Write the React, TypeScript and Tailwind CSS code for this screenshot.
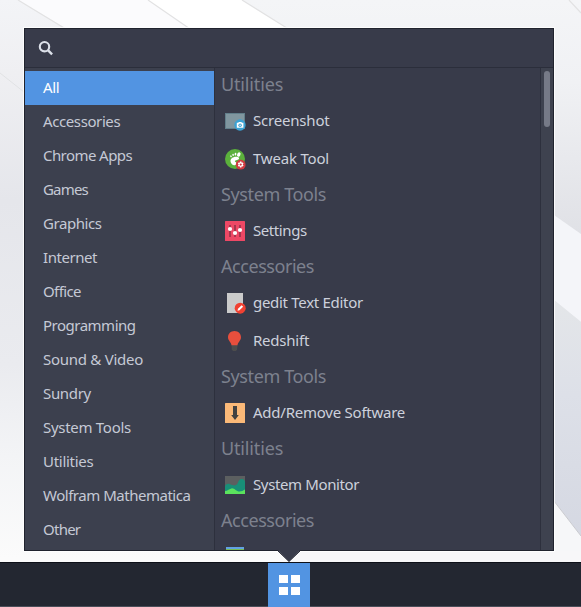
import type { ReactNode } from "react";

const categories: { name: string; track: string }[] = [
  { name: "All", track: "tracking-[-0.4px]" },
  { name: "Accessories", track: "tracking-[-0.4px]" },
  { name: "Chrome Apps", track: "tracking-[-0.57px]" },
  { name: "Games", track: "tracking-[-0.8px]" },
  { name: "Graphics", track: "tracking-[-0.44px]" },
  { name: "Internet", track: "tracking-[-0.44px]" },
  { name: "Office", track: "tracking-[-0.6px]" },
  { name: "Programming", track: "tracking-[-0.5px]" },
  { name: "Sound & Video", track: "tracking-[-0.27px]" },
  { name: "Sundry", track: "tracking-[-0.33px]" },
  { name: "System Tools", track: "tracking-[-0.29px]" },
  { name: "Utilities", track: "tracking-[-0.28px]" },
  { name: "Wolfram Mathematica", track: "tracking-[-0.48px]" },
  { name: "Other", track: "tracking-[-0.75px]" },
];

function Wallpaper() {
  return (
    <svg className="absolute inset-0 h-full w-full" viewBox="0 0 581 607" preserveAspectRatio="none">
      <defs>
        <linearGradient id="base" x1="0" y1="0" x2="0" y2="1">
          <stop offset="0" stopColor="#f3f4f7" />
          <stop offset="0.12" stopColor="#efeff2" />
          <stop offset="0.33" stopColor="#e5e6eb" />
          <stop offset="0.6" stopColor="#eaebef" />
          <stop offset="0.75" stopColor="#f3f4f6" />
          <stop offset="0.92" stopColor="#fbfbfb" />
        </linearGradient>
        <linearGradient id="right" x1="0" y1="0" x2="0" y2="234" gradientUnits="userSpaceOnUse">
          <stop offset="0" stopColor="#f4f5f7" />
          <stop offset="0.35" stopColor="#f0f1f4" />
          <stop offset="1" stopColor="#e0e1e6" />
        </linearGradient>
        <linearGradient id="shade" x1="0" y1="0" x2="0" y2="1">
          <stop offset="0" stopColor="#e4e6e9" />
          <stop offset="0.4" stopColor="#dde0e8" />
          <stop offset="1" stopColor="#d5d8e2" />
        </linearGradient>
      </defs>
      <rect width="581" height="607" fill="url(#base)" />
      <path d="M18 0H148L192 30H69Z" fill="#fbfbfd" />
      <path d="M148 0H242L290 30H192Z" fill="#ffffff" />
      <path d="M242 0H581V240H540V30H290Z" fill="url(#right)" />
      <path d="M18 0L69 31M148 0L193 31M242 0L290 30M569 0L581 13" stroke="#e2e2e3" strokeWidth="1.2" fill="none" />
      <path d="M0 73L24 92" stroke="#e1e2e4" fill="none" />
      <path d="M554 215L581 234V322L554 300Z" fill="#f4f5f9" />
      <path d="M554 300L581 322V536L554 501Z" fill="url(#shade)" />
      <path d="M554 501L581 536V562H554Z" fill="#f6f7f9" />
      <path d="M554 501L581 536" stroke="#c9cacf" />
      <path d="M581 551V562H290V551Z" fill="#f7f7f9" />
    </svg>
  );
}

function IconFrame({ children }: { children: ReactNode }) {
  return (
    <svg className="h-[22px] w-[22px] shrink-0" viewBox="0 0 22 22">
      {children}
    </svg>
  );
}

const icons = {
  screenshot: (
    <IconFrame>
      <rect x="1" y="3" width="20" height="16" fill="#627f8b" />
      <rect x="2" y="4" width="18" height="14" fill="#80969f" />
      <circle cx="16" cy="15" r="5.7" fill="#3ba2d3" />
      <path d="M12.8 12.8h1.500l.5-.9h2.600l.5.9h1.500v4.900h-6.600z" fill="#fff" />
      <circle cx="16.100" cy="15.200" r="1.700" fill="#3ba2d3" />
      <circle cx="16.100" cy="15.200" r=".7" fill="#fff" />
    </IconFrame>
  ),
  tweak: (
    <IconFrame>
      <circle cx="11" cy="11" r="10" fill="#5bb13c" />
      <path d="M12 8.800c-3.200.1-5.700 1.900-5.500 4.500.2 2.500 2.200 4.200 4.300 3.900 1.900-.3 2.100-1.500 1.600-2.500-.4-.9-1.700-.9-1.500-1.800.2-1 3.900-.7 4.200-2.500.1-1-1-1.600-3.100-1.600z" fill="#fff" />
      <ellipse cx="14.800" cy="6.500" rx="1.600" ry="2.300" transform="rotate(25 14.800 6.500)" fill="#fff" />
      <ellipse cx="11.500" cy="6.100" rx=".9" ry="1.400" transform="rotate(8 11.500 6.100)" fill="#fff" />
      <ellipse cx="9.100" cy="6.900" rx=".8" ry="1.100" transform="rotate(-12 9.100 6.900)" fill="#fff" />
      <ellipse cx="7" cy="8.300" rx=".7" ry="1" transform="rotate(-30 7 8.300)" fill="#fff" />
      <circle cx="16.700" cy="16.700" r="4.900" fill="#d13b42" />
      <path d="M16 13.600h1.400l.3 1.100 1.100-.3.7 1.200-.8.9.8.9-.7 1.200-1.100-.3-.3 1.300H16l-.3-1.300-1.100.3-.7-1.200.8-.9-.8-.9.7-1.200 1.100.3z" fill="#fff" />
      <circle cx="16.700" cy="16.600" r="1.100" fill="#d13b42" />
    </IconFrame>
  ),
  settings: (
    <IconFrame>
      <rect x="1" y="1" width="20" height="20" rx=".6" fill="#ee4865" />
      <path d="M6 5v12M11 5v12M16 5v12" stroke="#8e3047" strokeWidth="1.500" />
      <circle cx="6" cy="9" r="2.100" fill="#fff" />
      <circle cx="11" cy="13" r="2.100" fill="#fff" />
      <circle cx="16" cy="10" r="2.100" fill="#fff" />
    </IconFrame>
  ),
  gedit: (
    <IconFrame>
      <rect x="3" y="1" width="16" height="20" fill="#cbcbcb" />
      <circle cx="16.200" cy="16.200" r="5.500" fill="#f14132" />
      <path d="M13.500 18.800l.5-2 3.600-3.500 1.500 1.500-3.600 3.500z" fill="#fff" />
    </IconFrame>
  ),
  redshift: (
    <IconFrame>
      <path d="M7.500 15h6l-.4 4.500-1.200 1.500H9l-1.200-1.500z" fill="#4d4d4d" />
      <path d="M10.500 1C6.700 1 4 3.800 4 7.300c0 3.200 3 4.800 3.500 8h6c.5-3.200 3.500-4.800 3.500-8C17 3.800 14.300 1 10.500 1z" fill="#e84f3d" />
    </IconFrame>
  ),
  software: (
    <IconFrame>
      <rect x="1" y="1" width="20" height="20" rx=".6" fill="#fbb978" />
      <path d="M9 4h4v9h1.800L11 18l-3.800-5H9z" fill="#414141" />
    </IconFrame>
  ),
  monitor: (
    <IconFrame>
      <rect x="1" y="2" width="20" height="18" fill="#5c5f60" />
      <path d="M1 20v-8c1.200-2 3-2.600 5-1.800 3 1.200 5.500 2.300 7.500-.7 1-2.500 2-4.500 4.500-4.500 1.500 0 2.500 1 3 2.500V20z" fill="#188f78" />
      <path d="M1 20v-3c2.500 0 4.500-2.300 7-2.800 2.700 0 4.500 3.300 7.500 3.300 2 0 3.500-1 5.500-2V20z" fill="#5be35d" />
    </IconFrame>
  ),
  picture: (
    <IconFrame>
      <rect x="2" y="1" width="18" height="20" fill="#76ba56" />
      <rect x="2" y="1" width="18" height="2" fill="#62a2e4" />
    </IconFrame>
  ),
};

const groups: { title: string; track: string; apps: { name: string; icon: keyof typeof icons; track: string }[] }[] = [
  {
    title: "Utilities",
    track: "tracking-[-0.15px]",
    apps: [
      { name: "Screenshot", icon: "screenshot", track: "tracking-[-0.2px]" },
      { name: "Tweak Tool", icon: "tweak", track: "tracking-[-0.2px]" },
    ],
  },
  {
    title: "System Tools",
    track: "tracking-[-0.38px]",
    apps: [{ name: "Settings", icon: "settings", track: "tracking-[-0.42px]" }],
  },
  {
    title: "Accessories",
    track: "tracking-[-0.45px]",
    apps: [
      { name: "gedit Text Editor", icon: "gedit", track: "tracking-[-0.3px]" },
      { name: "Redshift", icon: "redshift", track: "tracking-[-0.22px]" },
    ],
  },
  {
    title: "System Tools",
    track: "tracking-[-0.38px]",
    apps: [{ name: "Add/Remove Software", icon: "software", track: "tracking-[-0.24px]" }],
  },
  {
    title: "Utilities",
    track: "tracking-[-0.15px]",
    apps: [{ name: "System Monitor", icon: "monitor", track: "tracking-[-0.38px]" }],
  },
  { title: "Accessories", track: "tracking-[-0.45px]", apps: [{ name: "", icon: "picture", track: "" }] },
];

export default function App() {
  return (
    <div className="relative flex h-[607px] w-[581px] flex-col overflow-hidden font-['Noto_Sans',sans-serif] text-[15px]">
      <Wallpaper />
      <main className="relative ml-6 mt-7 flex h-[523px] w-[530px] flex-col border border-[#20232e] bg-[#383b4a] shadow-[0_0_0_1px_#fffc]">
        <div className="flex h-[39px] shrink-0 items-center border-b border-[#2b2e3b] pl-[13px]">
          <svg className="h-4 w-4" viewBox="0 0 16 16" fill="none" stroke="#dce0e9">
            <circle cx="6.500" cy="6.700" r="4.700" strokeWidth="2.100" />
            <path d="M9.900 10.100l4.200 4.200" strokeWidth="2.400" />
          </svg>
        </div>
        <div className="flex min-h-0 flex-1">
          <nav className="w-[189px] shrink-0 bg-[#3c404e] pt-[3px] text-[#c5c9d5]">
            {categories.map((c, i) => (
              <div
                key={c.name}
                className={`flex h-[34px] items-center whitespace-nowrap pb-[2px] pl-[18px] ${c.track} ${i === 0 ? "bg-[#5294e2] text-white" : ""}`}
              >
                {c.name}
              </div>
            ))}
          </nav>
          <section className="min-w-0 flex-1 overflow-hidden border-l border-[#2d303d]">
            {groups.map((g, i) => (
              <div key={i}>
                <h2 className={`flex h-[34px] items-center whitespace-nowrap pb-[2px] pl-[6px] text-[18px] text-[#7d818e] ${g.track}`}>
                  {g.title}
                </h2>
                {g.apps.map((a) => (
                  <div key={a.icon} className={`flex h-[38px] items-center gap-[7px] whitespace-nowrap pl-[9px] text-[#cdd1dc] ${a.track}`}>
                    {icons[a.icon]}
                    <span className="pb-[2px]">{a.name}</span>
                  </div>
                ))}
              </div>
            ))}
          </section>
          <div className="w-[13px] shrink-0 border-l border-[#2d303d] bg-[#3e424f] pl-[3px] pt-[3px]">
            <div className="h-14 w-[6px] rounded-full bg-[#767a87]" />
          </div>
        </div>
      </main>
      <footer className="relative mt-[11px] flex h-[45px] justify-center border-b border-t border-b-[#4a4e59] border-t-[#0d1018] bg-[#232731] pr-[3px]">
        <div className="grid h-11 w-[42px] grid-cols-[9px_9px] grid-rows-[8px_8px] place-content-center gap-x-[3px] gap-y-1 bg-[#5294e2]">
          <i className="bg-white" />
          <i className="bg-white" />
          <i className="bg-white" />
          <i className="bg-white" />
        </div>
      </footer>
      <svg className="absolute left-[277px] top-[549px] h-[13px] w-6" viewBox="0 0 24 13">
        <path d="M.5 1L12 12.500 23.500 1V0H.5z" fill="#383b4a" />
        <path d="M.5 1.500L12 12.500 23.500 1.500" fill="none" stroke="#20232e" />
      </svg>
    </div>
  );
}
